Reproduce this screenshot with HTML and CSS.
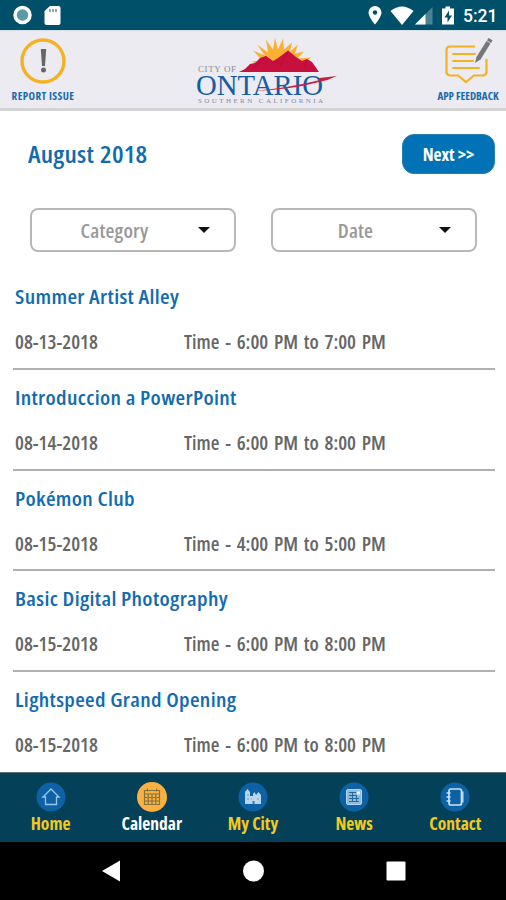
FILE: index.html
```html
<!DOCTYPE html>
<html lang="en">
<head>
<meta charset="utf-8">
<title>City of Ontario – Calendar</title>
<link rel="stylesheet" href="styles.css">
</head>
<body>
<div class="status">
  <svg class="status-left" width="70" height="30" viewBox="0 0 70 30"><circle cx="22.500" cy="15" r="7.500" fill="#5c9aa9" stroke="#fff" stroke-width="3.500"/><path d="M50 6h8.500q2 0 2 2v15q0 2-2 2h-12q-2 0-2-2V11z" fill="#fff"/><path d="M50 9v3M53 9v3M56 9v3" stroke="#5c8594" stroke-width="1.400"/></svg>
  <svg class="status-right" width="96" height="30" viewBox="365 0 96 30"><path d="M375 6a6.500 6.500 0 0 0-6.500 6.500c0 4.500 6.500 12 6.500 12s6.500-7.500 6.500-12A6.500 6.500 0 0 0 375 6z" fill="#fff"/><circle cx="375" cy="12.500" r="2.200" fill="#00506a"/><path d="M390.500 11Q402 2 413.500 11L402 25z" fill="#fff"/><path d="M432.500 7v17.500H415z" fill="#4a8293"/><path d="M425.500 14v10.500H415z" fill="#fff"/><path d="M445.500 6.500h4.500v2h4v16h-12v-16h3.500z" fill="#fff"/><path d="M449 10.500l-4.500 7h3v5l4.500-7h-3z" fill="#00506a"/></svg>
  <span class="clock">5:21</span>
</div>
<header class="header">
  <div class="action report">
    <svg width="48" height="48" viewBox="0 0 48 48"><circle cx="24" cy="24" r="21" fill="none" stroke="#f4b223" stroke-width="3.400"/><path d="M21.800 12h5.400l-1.200 17h-3z" fill="#666"/><circle cx="24.500" cy="33" r="2.500" fill="#666"/></svg>
    <span class="action-label">REPORT ISSUE</span>
  </div>
  <svg class="logo" width="146" height="74" viewBox="194 34 146 74">
    <path d="M262 66L252 60l10-1-9-10 12 5-8-11 11 8-2-13 7 10 2-12 3 12 5-11 1 11 8-7-2 9 8-7-3 9 9-2-7 7 14-1-10 8z" fill="#fbb034" transform="translate(0 1.500)"/>
    <path d="M239 72l6-3 5-5 5-1 5-5 6-2 7 5 5-3 10-7.500 8 6.500 6 4 5-2 5 3 7 10z" fill="#c8103e"/>
    <path d="M252 69l14-13M280 66l8-15M304 68l3-8" stroke="#a9093a" stroke-width=".7" fill="none"/>
    <text x="198" y="72" class="city" textLength="38">CITY OF</text>
    <text x="196" y="95" class="ontario" textLength="127" lengthAdjust="spacingAndGlyphs">ONTARIO</text>
    <text x="198" y="103" class="socal" textLength="125">SOUTHERN CALIFORNIA</text>
    <path d="M254 91q34-3 66-11l-1-2 18-2q-8 4-18 6-30 8-65 9z" fill="#c8203e"/>
  </svg>
  <div class="action feedback">
    <svg width="52" height="48" viewBox="442 37 52 48"><path d="M475 46.500H450q-3.500 0-3.500 3.500v22q0 3 3.500 3.500h8l8 6.500 8-6.500h9q3.500-.5 3.500-3.500V59" fill="none" stroke="#f4b223" stroke-width="2.200"/><path d="M453 54h22M453 61h20M453 68h26" stroke="#f4b223" stroke-width="2" stroke-linecap="round"/><path d="M475 63l1.500-6 10-16 4 2.500-10 16z" fill="#777"/><path d="M487 40.500l1.500-2.500 4 2.300-1.500 2.600z" fill="#777"/></svg>
    <span class="action-label">APP FEEDBACK</span>
  </div>
</header>
<main class="main">
  <div class="month"><h1>August 2018</h1><button class="next">Next &gt;&gt;</button></div>
  <div class="filters">
    <div class="select"><span>Category</span><svg width="12" height="6" viewBox="0 0 12 6"><path d="M0 0h12L6 6z"/></svg></div>
    <div class="select"><span>Date</span><svg width="12" height="6" viewBox="0 0 12 6"><path d="M0 0h12L6 6z"/></svg></div>
  </div>
  <div class="events">
    <article class="event"><h2>Summer Artist Alley</h2><div class="when"><span>08-13-2018</span><span>Time - 6:00 PM to 7:00 PM</span></div></article>
    <article class="event"><h2>Introduccion a PowerPoint</h2><div class="when"><span>08-14-2018</span><span>Time - 6:00 PM to 8:00 PM</span></div></article>
    <article class="event"><h2>Pokémon Club</h2><div class="when"><span>08-15-2018</span><span>Time - 4:00 PM to 5:00 PM</span></div></article>
    <article class="event"><h2>Basic Digital Photography</h2><div class="when"><span>08-15-2018</span><span>Time - 6:00 PM to 8:00 PM</span></div></article>
    <article class="event"><h2>Lightspeed Grand Opening</h2><div class="when"><span>08-15-2018</span><span>Time - 6:00 PM to 8:00 PM</span></div></article>
  </div>
</main>
<nav class="tabs">
  <div class="tab"><svg width="30" height="30" viewBox="0 0 30 30"><circle cx="15" cy="15" r="14.500" fill="#0d62a5"/><path d="M7 15l8-8 8 8h-2.500v7.500h-11V15z" fill="none" stroke="#9bc5e5" stroke-width="1.300"/></svg><span>Home</span></div>
  <div class="tab active"><svg width="30" height="30" viewBox="0 0 30 30"><circle cx="15" cy="15" r="15" fill="#fbb040"/><path d="M7.500 8.500h15v14h-15zM7.500 12h15M7.500 15.500h15M7.500 19h15M11.200 12v10.500M15 12v10.500M18.800 12v10.500M10.500 6.500v3M19.500 6.500v3" fill="none" stroke="#80743f" stroke-width="1.200"/></svg><span>Calendar</span></div>
  <div class="tab"><svg width="30" height="30" viewBox="0 0 30 30"><circle cx="15" cy="15" r="14.500" fill="#0d62a5"/><path d="M7 22V10l2.500-3 2.500 3v4h3v-2l1.500-2 1.500 3 2.500-3 2.500 3v9z" fill="#b8d7ef"/><path d="M9 13h2M9 17h2M13 17h1M19 17h2" stroke="#6a9fca"/><path d="M14.500 19h2v3h-2z" fill="#3879b2"/></svg><span>My City</span></div>
  <div class="tab"><svg width="30" height="30" viewBox="0 0 30 30"><circle cx="15" cy="15" r="14.500" fill="#0d62a5"/><rect x="7.500" y="7.500" width="15" height="15" rx="1.500" fill="#8ebadd" stroke="#b8d7ef"/><path d="M10 10.500h7M10 13.500h7M10 16.500h10M10 19.500h10M13.500 10v10M17.500 13v7" stroke="#26699f"/><rect x="18" y="9.500" width="3" height="3" fill="#fff"/></svg><span>News</span></div>
  <div class="tab"><svg width="30" height="30" viewBox="0 0 30 30"><circle cx="15" cy="15" r="14.500" fill="#0d62a5"/><rect x="9" y="7" width="12.500" height="16" rx="2" fill="none" stroke="#c9e2f5" stroke-width="1.700"/><path d="M6.500 11h4M6.500 15h4M6.500 19h4M22.800 9.500v11" stroke="#c9e2f5" stroke-width="1.400"/></svg><span>Contact</span></div>
</nav>
<div class="android">
  <svg width="506" height="58" viewBox="0 842 506 58" fill="#fff"><path d="M102 871l18-10.500v21z"/><circle cx="253.500" cy="871" r="10.500"/><rect x="386.500" y="861.500" width="19" height="19" rx="1"/></svg>
</div>
</body>
</html>
```
FILE: styles.css
```css
* { box-sizing: border-box; }
body { margin: 0; width: 506px; height: 900px; overflow: hidden; display: flex; flex-direction: column; background: #fff; font-family: "Open Sans", sans-serif; font-stretch: 75%; font-weight: 700; }
svg { display: block; flex: none; }
h1, h2 { margin: 0; font-weight: 600; transform-origin: left; }
.status { height: 30px; flex: none; display: flex; background: #00506a; color: #fff; }
.status-right { margin-left: auto; }
.clock { width: 45px; padding-left: 2px; font: 500 17.500px/32px Roboto, sans-serif; }
.header { height: 81px; flex: none; display: flex; justify-content: space-between; background: #ebebf1; border-top: 1px solid #d6dfe5; border-bottom: 3px solid #d4d4d6; }
.action { display: flex; flex-direction: column; align-items: center; color: #1a6aab; font-size: 11px; line-height: 14px; white-space: nowrap; }
.report { width: 86px; padding-top: 6px; }
.report .action-label { letter-spacing: .4px; }
.feedback { width: 76px; padding-top: 6px; }
.action-label { margin-top: 4px; }
.logo { margin: 3px 0 0 17px; }
.city { font: 9px "Liberation Serif", serif; fill: #8a8a9b; }
.ontario { font: 29px "Liberation Serif", serif; fill: #155ca5; }
.socal { font: 7px "Liberation Serif", serif; fill: #8888a0; }
.main { flex: none; height: 661px; overflow: hidden; }
.month { height: 97px; padding: 23px 11px 0 28px; display: flex; justify-content: space-between; align-items: flex-start; }
.month h1 { font-size: 24px; line-height: 40px; letter-spacing: .2px; word-spacing: 1px; transform: scaleX(1.08); color: #126bb0; }
.next { width: 93px; height: 40px; padding: 0; border: 1px solid #2a7db5; border-radius: 12px; background: #0072b5; color: #fff; font: inherit; font-stretch: 75%; font-size: 17.500px; }
.filters { display: flex; gap: 35px; padding-left: 30px; }
.select { width: 206px; height: 44px; padding-right: 25px; display: flex; align-items: center; border: 2px solid #b8b8b8; border-radius: 8px; color: #999; font-size: 19.500px; font-weight: 600; letter-spacing: .2px; }
.select span { flex: 1; text-align: center; transform: scaleX(1.05); }
.select svg { position: relative; left: 1px; fill: #111; }
.events { padding: 17px 11px 0 13px; }
.event { height: 100.800px; padding: 14px 2px 0; border-bottom: 2px solid #b0b0b0; }
.event:last-child { border-bottom: 0; }
.event h2 { width: max-content; font-size: 20px; line-height: 28px; letter-spacing: .3px; transform: scaleX(1.1); color: #126bb0; }
.when { margin-top: 17px; display: grid; grid-template-columns: 168.500px max-content; font-size: 19px; font-weight: 600; line-height: 28px; word-spacing: 2px; color: #666; }
.when span { transform: scaleX(1.05); transform-origin: left; }
.tabs { height: 70px; flex: none; display: grid; grid-template-columns: repeat(5, 101.200px); background: #054059; border-top: 1px solid #55727e; color: #f3c920; }
.tab { display: flex; flex-direction: column; align-items: center; padding-top: 9px; font-size: 17.500px; line-height: 22px; white-space: nowrap; }
.active { color: #fff; }
.android { height: 58px; flex: none; background: #000; }
```
